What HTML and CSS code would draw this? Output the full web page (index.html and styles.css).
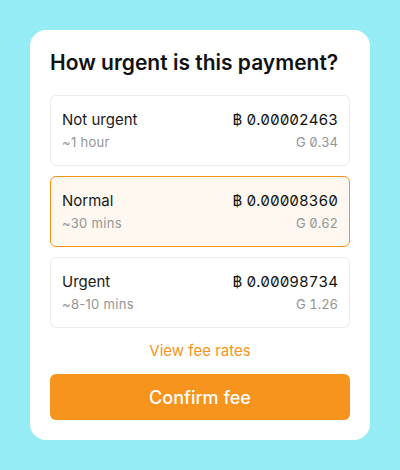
FILE: index.html
```html
<!DOCTYPE html>
<html>
<head>
<meta charset="utf-8">
<link rel="stylesheet" href="styles.css">
</head>
<body>
<div class="card">
  <h1 class="title">How urgent is this payment?</h1>
  <div class="options">
    <div class="option">
      <div class="row"><span class="name">Not urgent</span><span class="amount">฿ 0.00002463</span></div>
      <div class="row sub"><span>~1 hour</span><span class="num">G 0.34</span></div>
    </div>
    <div class="option selected">
      <div class="row"><span class="name">Normal</span><span class="amount">฿ 0.00008360</span></div>
      <div class="row sub"><span>~30 mins</span><span class="num">G 0.62</span></div>
    </div>
    <div class="option">
      <div class="row"><span class="name">Urgent</span><span class="amount">฿ 0.00098734</span></div>
      <div class="row sub"><span>~8-10 mins</span><span class="num">G 1.26</span></div>
    </div>
  </div>
  <a class="link">View fee rates</a>
  <button class="confirm">Confirm fee</button>
</div>
</body>
</html>
```
FILE: styles.css
```css
html, body { margin: 0; padding: 0; }
body {
  background: #95ecf5;
  font-family: Inter, "Noto Sans", sans-serif;
  width: 400px;
  height: 470px;
  padding: 30px;
  box-sizing: border-box;
}
.card {
  background: #fff;
  border-radius: 16px;
  padding: 20px 20px 20px;
  display: flex;
  flex-direction: column;
}
.title {
  margin: 0 0 19px;
  font-size: 21px;
  font-weight: 600;
  line-height: 26px;
  color: #111;
}
.options { display: flex; flex-direction: column; gap: 10px; }
.option {
  border: 1px solid #ececec;
  border-radius: 6px;
  padding: 14px 11px 0 11px;
  height: 71px;
  box-sizing: border-box;
  display: flex;
  flex-direction: column;
  gap: 3px;
}
.option.selected { border-color: #f7931a; background: #fef8f1; }
.row { display: flex; justify-content: space-between; align-items: baseline; }
.name { font-size: 15px; color: #1a1a1a; line-height: 20px; }
.amount {
  font-size: 15px; color: #111; line-height: 20px;
  font-variant-numeric: tabular-nums slashed-zero;
}
.sub { font-size: 13px; color: #949494; line-height: 18px; letter-spacing: 0.3px; }
.num { font-variant-numeric: tabular-nums slashed-zero; letter-spacing: 0; }
.link {
  margin-top: 13px;
  text-align: center;
  color: #f7931a;
  font-size: 15px;
  line-height: 20px;
}
.confirm {
  margin-top: 13px;
  height: 46px;
  border: none;
  border-radius: 6px;
  background: #f7941d;
  color: #fff;
  font-family: inherit;
  font-size: 18px;
  font-weight: 500;
}
```
